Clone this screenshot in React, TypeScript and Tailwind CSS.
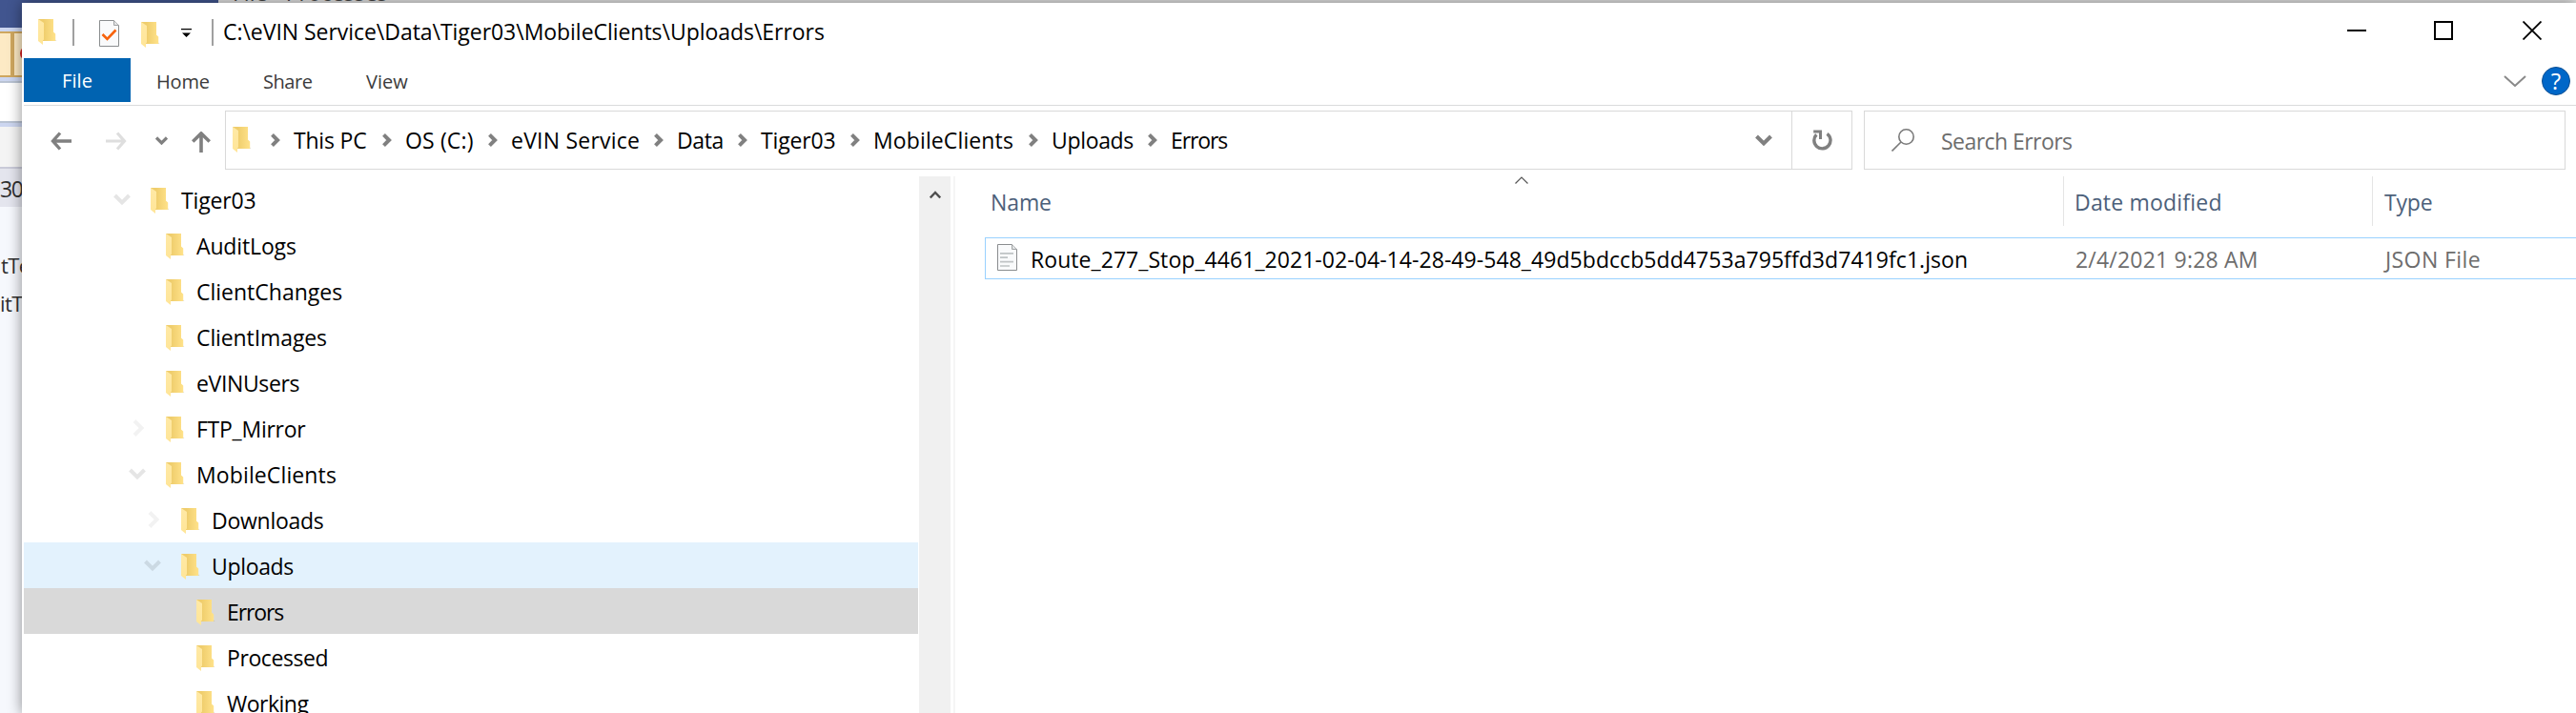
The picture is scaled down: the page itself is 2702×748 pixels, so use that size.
import { ReactNode } from 'react';
import { clsx } from 'clsx';

type Crumb = { label: string; className: string };

const CRUMBS: Crumb[] = [
  { label: 'This PC', className: 'w-[117px] tracking-[-0.2px]' },
  { label: 'OS (C:)', className: 'w-[111px] tracking-[0.15px]' },
  { label: 'eVIN Service', className: 'w-[174px] tracking-[0.22px]' },
  { label: 'Data', className: 'w-[88px] tracking-[-0.4px]' },
  { label: 'Tiger03', className: 'w-[118px] tracking-[-0.15px]' },
  { label: 'MobileClients', className: 'w-[187px] tracking-[0.12px]' },
  { label: 'Uploads', className: 'w-[125px] tracking-[-0.33px]' },
  { label: 'Errors', className: 'w-[110px] tracking-[-1.1px]' },
];

type TreeNode = {
  label: string;
  level: 0 | 1 | 2 | 3;
  state?: 'open' | 'closed';
  tracking: string;
  background?: string;
};

const TREE: TreeNode[] = [
  { label: 'Tiger03', level: 0, state: 'open', tracking: 'tracking-[-0.15px]' },
  { label: 'AuditLogs', level: 1, tracking: 'tracking-[-0.14px]' },
  { label: 'ClientChanges', level: 1, tracking: 'tracking-normal' },
  { label: 'ClientImages', level: 1, tracking: 'tracking-[-0.1px]' },
  { label: 'eVINUsers', level: 1, tracking: 'tracking-[-0.37px]' },
  { label: 'FTP_Mirror', level: 1, state: 'closed', tracking: 'tracking-[-0.25px]' },
  { label: 'MobileClients', level: 1, state: 'open', tracking: 'tracking-[0.12px]' },
  { label: 'Downloads', level: 2, state: 'closed', tracking: 'tracking-[-0.26px]' },
  { label: 'Uploads', level: 2, state: 'open', tracking: 'tracking-[-0.33px]', background: 'bg-[#e3f2fd]' },
  { label: 'Errors', level: 3, tracking: 'tracking-[-1.1px]', background: 'bg-[#d9d9d9]' },
  { label: 'Processed', level: 3, tracking: 'tracking-[-0.42px]' },
  { label: 'Working', level: 3, tracking: 'tracking-[-0.5px]' },
];

const INDENT = ['pl-[93px]', 'pl-[109px]', 'pl-[125px]', 'pl-[141px]'];

function FolderIcon({ className }: { className?: string }) {
  return (
    <svg viewBox="0 0 20 28" className={clsx('h-7 w-5 shrink-0', className)}>
      <defs>
        <linearGradient id="folder-back" x1="0" x2="1" y1="0" y2="0">
          <stop offset="0.3" stopColor="#efcd6c" />
          <stop offset="1" stopColor="#ffe28a" />
        </linearGradient>
        <linearGradient id="folder-flap" x1="0" x2="0" y1="0" y2="1">
          <stop offset="0" stopColor="#ffe9a6" />
          <stop offset="1" stopColor="#ffe597" />
        </linearGradient>
      </defs>
      <path d="M14 23H19.5L18 21.5Z" fill="#000" opacity="0.12" />
      <path d="M0 0H16V13.5L18.2 15.5V23H4Z" fill="url(#folder-back)" />
      <path d="M0 0L6 4V21.5L5 22.5V27L0 23Z" fill="url(#folder-flap)" />
    </svg>
  );
}

function Chevron({ direction, className }: { direction: 'down' | 'right'; className?: string }) {
  return (
    <svg viewBox="0 0 20 20" className={clsx('shrink-0', className)} fill="none" stroke="currentColor">
      <path d={direction === 'down' ? 'M2.5 6L10 13.5L17.5 6' : 'M7 2.5L14.5 10L7 17.5'} strokeWidth="4" />
    </svg>
  );
}

function CrumbChevron() {
  return (
    <svg viewBox="0 0 10 16" className="h-4 w-2.5 shrink-0" fill="none" stroke="#808080" strokeWidth="4">
      <path d="M1.5 2.4L7.1 8L1.5 13.6" />
    </svg>
  );
}

function DocumentIcon({ children, className }: { children: ReactNode; className?: string }) {
  return (
    <svg viewBox="0 0 21 28" className={clsx('h-7 w-[21px] shrink-0', className)} fill="none">
      <path d="M0.5 0.5H15.5L20.5 5.5V27.5H0.5Z" fill="#f9fafb" stroke="#8a8d8f" />
      <path d="M15.5 0.5V5.5H20.5" fill="#e3e5e6" stroke="#a0a3a5" />
      {children}
    </svg>
  );
}

function BackgroundStrip() {
  return (
    <div className="flex w-[23px] shrink-0 flex-col overflow-hidden bg-[#f6f8fd] text-[22px] leading-none text-[#303030]">
      <div className="h-[29px] shrink-0 bg-[#41558f]" />
      <div className="h-1 shrink-0 bg-[#ccd6f0]" />
      <div className="flex h-12 shrink-0 border-y-2 border-[#cfa75f] bg-[#fdeac5]">
        <div className="w-[11px] shrink-0" />
        <div className="w-1 shrink-0 bg-[#cfa75f]" />
        <div className="mt-[13px] ml-1.5 size-4 shrink-0 rounded-full bg-[#d81e1e]" />
      </div>
      <div className="h-1 shrink-0 bg-[#ccd6f0]" />
      <div className="h-11 shrink-0 border-y-2 border-[#b9c3d3] bg-white" />
      <div className="h-1 shrink-0 bg-[#ccd6f0]" />
      <div className="h-11 shrink-0 border-b-2 border-[#c9cad8] bg-[#f4f4f4]" />
      <div className="flex h-10 shrink-0 items-center bg-[#e4e5ee] pt-0.5 text-[23px] tracking-[-1.4px]">30</div>
      <div className="mt-[41px] h-10 shrink-0 pt-[9px] pl-px tracking-tight whitespace-nowrap">tTe</div>
      <div className="h-10 shrink-0 pt-[9px] tracking-tight whitespace-nowrap">itT</div>
    </div>
  );
}

function TitleBar() {
  return (
    <div className="flex h-[58px] items-start pl-[15px]">
      <FolderIcon className="mt-[17px]" />
      <div className="mt-[17px] ml-4 h-7 w-0.5 bg-[#a0a0a0]" />
      <DocumentIcon className="mt-[18px] ml-[26px]">
        <path d="M3.5 15L8.5 20L17.5 10.5" stroke="#f7630c" strokeWidth="2.6" />
      </DocumentIcon>
      <FolderIcon className="mt-5 ml-[23px]" />
      <svg viewBox="0 0 11 9" className="mt-[27px] ml-[22px] h-[9px] w-[11px]">
        <path d="M0 0H11V1.2H0ZM1 4.5H10L5.5 9Z" fill="#000" />
      </svg>
      <div className="mt-[17px] ml-[21px] h-7 w-0.5 bg-[#a0a0a0]" />
      <div className="mt-[14px] ml-2.5 h-8 leading-8 tracking-[-0.04px] whitespace-nowrap">
        {'C:\\eVIN Service\\Data\\Tiger03\\MobileClients\\Uploads\\Errors'}
      </div>
      <div className="mt-[19px] mr-9 ml-auto flex gap-[71px]">
        <svg viewBox="0 0 20 20" className="size-5">
          <path d="M0 9H20V11H0Z" fill="#000" />
        </svg>
        <svg viewBox="0 0 20 20" className="size-5" fill="none">
          <path d="M1 1H19V19H1Z" stroke="#000" strokeWidth="2" />
        </svg>
        <svg viewBox="0 0 20 20" className="ml-0.5 size-5" fill="none">
          <path d="M0.5 0.5L19.5 19.5M19.5 0.5L0.5 19.5" stroke="#000" strokeWidth="1.8" />
        </svg>
      </div>
    </div>
  );
}

function Ribbon() {
  return (
    <div className="flex h-[50px] items-start border-b border-[#dadbdc] text-[20px] leading-[46px] text-[#3b3b3b]">
      <div className="h-[46px] w-28 bg-[#0063b1] pt-px pl-10 tracking-[0.1px] text-white">File</div>
      <div className="w-[112px] pt-0.5 pl-[27px] tracking-[-0.2px]">Home</div>
      <div className="w-[106px] pt-0.5 pl-[27px] tracking-[-0.45px]">Share</div>
      <div className="pt-0.5 pl-[29px]">View</div>
      <svg viewBox="0 0 24 12" className="mt-[18px] ml-auto h-3 w-6" fill="none">
        <path d="M1 1L12 11L23 1" stroke="#8a8a8a" strokeWidth="2" />
      </svg>
      <div className="mt-[9px] mr-1.5 ml-4 flex size-[30px] items-center justify-center rounded-full border border-[#0b4f93] bg-[#0067c8] text-[24px] leading-none text-white">
        ?
      </div>
    </div>
  );
}

function NavigationBar() {
  return (
    <div className="flex h-[74px] items-start pt-[5px]">
      <div className="flex h-[62px] w-[211px] shrink-0 items-center pt-px pl-7 text-[#808080]">
        <svg viewBox="0 0 22 20" className="h-5 w-[22px]" fill="none" stroke="currentColor">
          <path d="M10 1.5L2.5 10L10 18.5M2 10H22" strokeWidth="3.4" />
        </svg>
        <svg viewBox="0 0 22 20" className="ml-9 h-5 w-[22px] text-[#dedede]" fill="none" stroke="currentColor">
          <path d="M12 1.5L19.5 10L12 18.5M20 10H0" strokeWidth="3.2" />
        </svg>
        <svg viewBox="0 0 13 9" className="ml-[30px] h-[9px] w-[13px]" fill="none" stroke="currentColor">
          <path d="M1 1.5L6.5 7L12 1.5" strokeWidth="3.2" />
        </svg>
        <svg viewBox="0 0 20 22" className="mt-[3px] ml-[25px] h-[22px] w-5" fill="none" stroke="currentColor">
          <path d="M1.2 10.5L10 1.9L18.8 10.5M10 2V22" strokeWidth="3.6" />
        </svg>
      </div>
      <div className="flex h-[62px] w-[1707px] shrink-0 items-center border border-[#d9d9d9]">
        <FolderIcon className="ml-[7px]" />
        <div className="ml-5 flex items-center">
          {CRUMBS.map(({ label, className }) => (
            <div key={label} className={clsx('flex items-center gap-[14px] whitespace-nowrap', className)}>
              <CrumbChevron />
              <span className="pt-px">{label}</span>
            </div>
          ))}
        </div>
        <Chevron direction="down" className="mr-[19px] ml-auto size-5 text-[#808080]" />
        <div className="flex h-full w-[63px] items-center justify-center border-l border-[#d9d9d9]">
          <svg viewBox="0 0 22 22" className="size-[22px]" fill="none" stroke="#808080">
            <path d="M16.5 4.3A8.6 8.6 0 1 1 5.3 5.2" strokeWidth="3.4" />
            <path d="M2.2 2H9.5V10" strokeWidth="3" />
          </svg>
        </div>
      </div>
      <div className="ml-3 flex h-[62px] w-[736px] items-center border border-[#d9d9d9] pl-7 text-[#6d6d6d]">
        <svg viewBox="0 0 24 24" className="size-6" fill="none" stroke="#7a7a7a" strokeWidth="1.6">
          <circle cx="15.5" cy="8.5" r="7.7" />
          <path d="M10 14L0.5 23.5" />
        </svg>
        <div className="ml-[28px] pt-0.5 tracking-[-0.55px]">Search Errors</div>
      </div>
    </div>
  );
}

function FolderTree() {
  return (
    <div className="w-[938px] shrink-0">
      {TREE.map(({ label, level, state, tracking, background }) => (
        <div key={label} className={clsx('flex h-12 items-start', INDENT[level], background)}>
          <div className="mt-3.5 w-5 shrink-0">
            {state === 'open' && <Chevron direction="down" className="size-5 text-black/10" />}
            {state === 'closed' && <Chevron direction="right" className="size-5 text-black/5" />}
          </div>
          <FolderIcon className="mt-3 ml-5" />
          <div className={clsx('ml-3 pt-px leading-[48px]', tracking)}>{label}</div>
        </div>
      ))}
    </div>
  );
}

function FileList() {
  return (
    <div className="min-w-0 flex-1 pl-[31px]">
      <div className="relative flex h-[52px] leading-[52px] text-[#4c607a]">
        <div className="w-[1132px] border-r border-[#e5e5e5] pt-px pl-1.5 tracking-[-0.1px]">Name</div>
        <div className="w-[324px] border-r border-[#e5e5e5] pt-px pl-[11px] tracking-[0.2px]">Date modified</div>
        <div className="pt-px pl-3 tracking-[-0.2px]">Type</div>
        {/* sort direction marker sits over the Name header */}
        <svg viewBox="0 0 14 8" className="absolute top-0 left-[556px] h-2 w-3.5" fill="none">
          <path d="M0.5 7.5L7 1L13.5 7.5" stroke="#555" strokeWidth="1.2" />
        </svg>
      </div>
      <div className="mt-3 flex h-11 border border-r-0 border-[#99d1ff] leading-[42px] text-[#6d6d6d]">
        <div className="flex w-[1143px] items-start pl-3 text-black">
          <DocumentIcon className="mt-1.5">
            <path d="M3 9.8H17M3 14.2H11M3 18.6H17M3 23H13" stroke="#bfc3c5" strokeWidth="1.7" />
          </DocumentIcon>
          <div className="ml-3.5 pt-px tracking-[0.06px] whitespace-nowrap">
            Route_277_Stop_4461_2021-02-04-14-28-49-548_49d5bdccb5dd4753a795ffd3d7419fc1.json
          </div>
        </div>
        <div className="w-[324px] pt-px tracking-[0.2px]">2/4/2021 9:28 AM</div>
        <div className="pt-px pl-px tracking-[0.4px]">JSON File</div>
      </div>
    </div>
  );
}

export default function App() {
  return (
    <div className="flex h-[748px] w-[2702px] overflow-hidden bg-white font-['Open_Sans','Noto_Sans',sans-serif] text-[23px] text-black">
      <BackgroundStrip />
      <div className="flex min-w-0 flex-1 flex-col">
        <div className="flex h-[3px] shrink-0 overflow-hidden bg-[#e1e1e1]">
          <div className="w-[206px] bg-[#41558f]" />
          <div className="-mt-[22px] ml-[15px] leading-[28px] whitespace-nowrap text-[#444]">File - Processes</div>
        </div>
        <div className="relative flex flex-1 flex-col bg-white pl-0.5 shadow-[0_0_14px_rgba(0,0,0,0.45)]">
          <TitleBar />
          <Ribbon />
          <NavigationBar />
          <div className="flex h-[564px] overflow-hidden">
            <FolderTree />
            <div className="ml-px w-[33px] shrink-0 bg-[#f0f0f0]">
              <svg viewBox="0 0 12 10" className="mt-3.5 ml-[11px] h-2.5 w-3" fill="none">
                <path d="M0.8 8.5L6 3L11.2 8.5" stroke="#505050" strokeWidth="2.4" />
              </svg>
            </div>
            <div className="ml-[3px] w-0.5 shrink-0 bg-[#f5f5f5]" />
            <FileList />
          </div>
        </div>
      </div>
    </div>
  );
}
